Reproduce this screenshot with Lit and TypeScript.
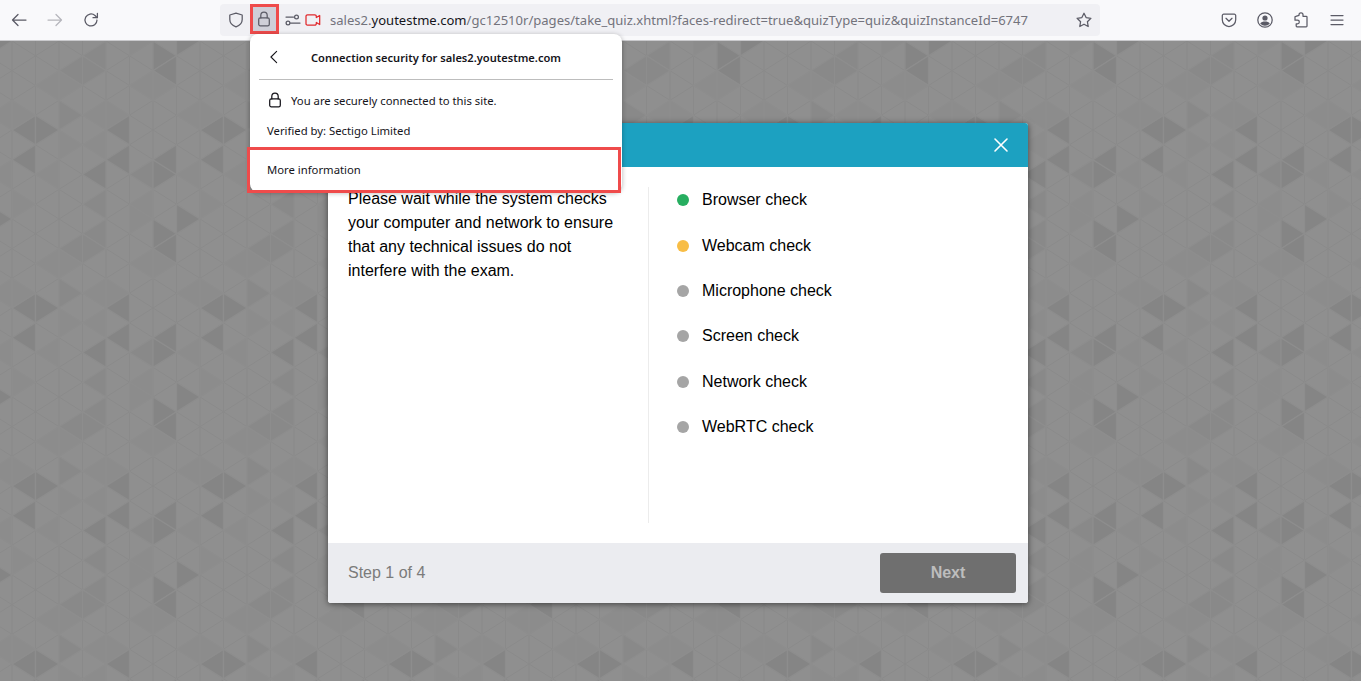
import { LitElement, html, css, svg } from "lit";
import { customElement } from "lit/decorators.js";

const W = 23.5;
const S = 29.667;
// [strip, half-row, darkness]
const TRIS: [number, number, number][] = [
  [0, 0, 3], [1, 0, 3], [0, 2, 3], [2, -1, 2], [3, -1, 1], [4, -1, 1], [4, 0, 3], [4, 2, 3],
  [3, 3, 3], [5, 3, 2], [6, 3, 3], [6, 2, 3], [3, 7, 2], [2, 8, 2], [3, 8, 2], [6, 7, 3], [6, 8, 3],
  [7, 6, 3], [3, 5, 2], [5, 5, 1], [5, 6, 1], [1, 9, 1], [2, 9, 1], [5, 9, 1], [6, 9, 1], [2, 1, 1], [0, -1, 1],
  [3, 1, 1], [7, -1, 1], [1, 3, 1], [7, 3, 1], [0, 5, 1],
];
const FILL = ["", "#8c8c8c", "#898989", "#858585"];

function triPoints(k: number, j: number, dy: number) {
  const x0 = k * W, x1 = (k + 1) * W, h = (S / 2);
  const y = (jj: number) => jj * h + dy;
  const even = ((k + j) % 2 + 2) % 2 === 0;
  return even
    ? `${x0},${y(j)} ${x1},${y(j - 1)} ${x1},${y(j + 1)}`
    : `${x1},${y(j)} ${x0},${y(j - 1)} ${x0},${y(j + 1)}`;
}

const gridLines = () => {
  const out = [];
  for (let k = 0; k <= 8; k++) {
    out.push(svg`<line x1=${k * W} y1="0" x2=${k * W} y2="178" />`);
  }
  for (let k = 0; k < 8; k++) {
    for (let n = -1; n <= 13; n++) {
      const j = n;
      if (((k + j) % 2 + 2) % 2 !== 0) continue;
      out.push(svg`<line x1=${k * W} y1=${(j * S) / 2} x2=${(k + 1) * W} y2=${((j - 1) * S) / 2} />`);
      out.push(svg`<line x1=${k * W} y1=${(j * S) / 2} x2=${(k + 1) * W} y2=${((j + 1) * S) / 2} />`);
    }
  }
  return out;
};

const checks = [
  ["Browser check", "ok"],
  ["Webcam check", "busy"],
  ["Microphone check", ""],
  ["Screen check", ""],
  ["Network check", ""],
  ["WebRTC check", ""],
];

@customElement("app-root")
export class AppRoot extends LitElement {
  static styles = css`
    :host { display: block; width: 1361px; height: 681px; overflow: hidden; position: relative; background: #8f8f8f; font-family: "Liberation Sans", Arial, sans-serif; }
    .toolbar { height: 40px; background: #f9f9fb; border-bottom: 1px solid #c9c9cc; display: flex; align-items: center; padding: 0 6px 0 1px; box-sizing: content-box; }
    .btn { width: 36px; height: 36px; display: flex; align-items: center; justify-content: center; flex: none; color: #5b5b66; }
    .btn svg, .urlbar svg { display: block; }
    .btn.off { color: #b6b6bc; }
    .urlbar { margin-left: 111px; width: 880px; height: 32px; background: #f0f0f4; border-radius: 4px; display: flex; align-items: center; flex: none; color: #5b5b66; }
    .shield { width: 30px; height: 32px; display: flex; align-items: center; justify-content: center; flex: none; padding-left: 2px; box-sizing: border-box; }
    .lock { width: 29px; height: 30px; margin-top: -2px; border: 3px solid #ef4b4b; background: #cfcfd8; box-sizing: border-box; display: flex; align-items: center; justify-content: center; flex: none; padding-right: 1px; }
    .perm { margin-left: 6px; flex: none; }
    .cam { margin-left: 4px; flex: none; color: #e0282c; }
    .url { margin-left: 9px; font: 13.05px "Noto Sans", sans-serif; color: #73737c; white-space: nowrap; flex: none; width: 746px; }
    .url b { font-weight: 400; color: #15141a; }
    .star { flex: none; }
    .right { margin-left: 111px; display: flex; flex: none; }
    .stage { height: 640px; display: grid; overflow: hidden; }
    .stage > * { grid-area: 1 / 1; }
    .bg { width: 1361px; height: 640px; display: block; }
    .center { display: flex; justify-content: center; padding: 82px 5px 0 0; z-index: 1; }
    .dialog { width: 700px; height: 480px; border-radius: 3px; overflow: hidden; background: #fff; box-shadow: 0 1px 6px rgba(0,0,0,.55); display: flex; flex-direction: column; }
    .dhead { height: 44px; background: #1ca1c1; display: flex; align-items: center; justify-content: flex-end; padding-right: 19px; flex: none; }
    .dbody { height: 376px; padding: 20px 0 20px 20px; box-sizing: border-box; display: flex; flex: none; }
    .intro { width: 301px; box-sizing: border-box; border-right: 1px solid #ececec; padding-right: 30px; margin: 0; font-size: 16px; line-height: 24px; color: #000; }
    .intro p { margin: 0; }
    .checks { margin: 0; padding: 1.3px 0 0 28px; list-style: none; display: flex; flex-direction: column; gap: 21.33px; font-size: 16px; line-height: 24px; color: #000; }
    .checks li { display: flex; align-items: center; gap: 13px; }
    .dot { width: 12px; height: 12px; border-radius: 50%; background: #a5a5a5; flex: none; }
    .dot.ok { background: #27ae60; }
    .dot.busy { background: #f8bd46; }
    .dfoot { height: 60px; background: #ebecf0; display: flex; align-items: center; justify-content: space-between; padding: 0 12px 0 20px; flex: none; }
    .step { font-size: 16px; color: #7b7b7b; }
    .next { width: 136px; height: 40px; border: 0; border-radius: 3px; background: #6f6f6f; color: #bdbdbd; font: bold 16px "Liberation Sans", Arial, sans-serif; }
    .popup { position: absolute; left: 250px; top: 34px; width: 372px; height: 158px; background: #fff; border-radius: 8px; box-shadow: 0 1px 5px rgba(0,0,0,.3); z-index: 2; font: 11.3px "Noto Sans", sans-serif; color: #15141a; display: flex; flex-direction: column; }
    .phead { height: 45px; margin: 0 9px; border-bottom: 1px solid #bdbdbd; display: flex; align-items: center; padding-left: 8px; box-sizing: content-box; flex: none; }
    .phead svg { margin-top: 1px; }
    .phead strong { font-weight: 600; font-size: 11.1px; margin: 2px 0 0 30px; white-space: nowrap; }
    .psec { display: flex; align-items: center; gap: 8px; padding: 10px 0 0 17px; height: 20px; }
    .psec svg { width: 16px; height: 16px; }
    .verified { padding: 10px 0 0 17px; height: 20px; display: flex; align-items: center; }
    .more { margin: auto 0 -1px -3px; width: 374px; height: 46px; border: 3px solid #ef4b4b; box-sizing: border-box; display: flex; align-items: center; padding: 0 0 2px 17px; flex: none; }
  `;

  private icon(paths: unknown, size = 16) {
    return html`<svg width=${size} height=${size} viewBox="0 0 16 16" fill="none" stroke="currentColor" stroke-width="1.25" stroke-linecap="round" stroke-linejoin="round">${paths}</svg>`;
  }

  render() {
    const lock = svg`<rect x="2.7" y="6.9" width="10.6" height="8" rx="1.6"/><path d="M4.8 6.9V4.4a3.2 3.2 0 0 1 6.4 0v2.5"/>`;
    return html`
      <div class="toolbar">
        <div class="btn">${this.icon(svg`<path d="M1.5 8h13.5M7 2.5 1.5 8 7 13.5"/>`)}</div>
        <div class="btn off">${this.icon(svg`<path d="M14.5 8H1M9 2.5 14.5 8 9 13.5"/>`)}</div>
        <div class="btn">${this.icon(svg`<path d="M14 8a6 6 0 1 1-2-4.500L14 5.500"/><path d="M14.400 1.300v4.400H10" />`)}</div>
        <div class="urlbar">
          <div class="shield">${this.icon(svg`<path d="M8 1.200 1.800 3v4.600c0 3.600 2.600 6 6.200 7.200 3.600-1.200 6.200-3.600 6.200-7.200V3z"/>`)}</div>
          <div class="lock">${this.icon(lock)}</div>
          <span class="perm">${this.icon(svg`<path d="M1 5h7.500M5.500 11H15"/><circle cx="11.500" cy="5" r="1.900"/><circle cx="3" cy="11" r="1.900"/>`)}</span>
          <span class="cam">${this.icon(svg`<path d="M2.500 2.800h7.300a1.500 1.500 0 0 1 1.500 1.500v1.200l3.400-2v9l-3.400-2v1.200a1.500 1.500 0 0 1-1.500 1.500H2.500A1.500 1.500 0 0 1 1 11.500V4.300a1.500 1.500 0 0 1 1.500-1.500z"/>`)}</span>
          <span class="url">sales2.<b>youtestme.com</b>/gc12510r/pages/take_quiz.xhtml?faces-redirect=true&quizType=quiz&quizInstanceId=6747</span>
          <span class="star">${this.icon(svg`<path d="m8 1.200 2.100 4.400 4.800.7-3.500 3.400.8 4.800L8 12.200l-4.200 2.300.8-4.800L1.100 6.300l4.800-.7z"/>`)}</span>
        </div>
        <div class="right">
          <div class="btn">${this.icon(svg`<path d="M2.700 2.200h10.600A1.400 1.400 0 0 1 14.700 3.600v4.200a6.700 6.700 0 0 1-13.400 0V3.600a1.400 1.400 0 0 1 1.400-1.400z"/><path d="m5 6.300 3 3 3-3"/>`)}</div>
          <div class="btn">
            <svg width="16" height="16" viewBox="0 0 16 16" fill="none" stroke="currentColor" stroke-width="1.25"><circle cx="8" cy="8" r="7.200"/><circle cx="8" cy="6" r="2.600" fill="currentColor" stroke="none"/><path d="M3.200 11.400c1-1.300 2.800-1.900 4.800-1.900s3.800.6 4.800 1.900a6.200 6.200 0 0 1-9.600 0z" fill="currentColor" stroke="none"/></svg>
          </div>
          <div class="btn">${this.icon(svg`<path d="M6 3.500V3a2 2 0 0 1 4 0v1.500h3.200a.8.800 0 0 1 .8.800v9a.8.800 0 0 1-.8.800H4a.8.800 0 0 1-.8-.8v-2.300h1.300a1.800 1.800 0 0 0 0-3.600H2V5.300a.8.800 0 0 1 .8-.8z" transform="translate(0 -.2)"/>`)}</div>
          <div class="btn">${this.icon(svg`<path d="M2 3.500h12M2 8h12M2 12.500h12"/>`)}</div>
        </div>
      </div>
      <div class="stage">
        <svg class="bg" viewBox="0 0 1361 640" aria-hidden="true">
          <defs>
            <pattern id="tri" width="188" height="178" patternUnits="userSpaceOnUse" patternTransform="translate(12 89)">
              <rect width="188" height="178" fill="#8f8f8f"/>
              <g stroke="#8a8a8a" stroke-width="1">${gridLines()}</g>
              <g stroke="#8d8d8d" stroke-width="1.2">
                ${TRIS.flatMap(([k, j, d]) => [0, 178, -178].map((dy) => svg`<polygon points=${triPoints(k, j, dy)} fill=${FILL[d]} />`))}
              </g>
            </pattern>
          </defs>
          <rect width="1361" height="640" fill="url(#tri)"/>
        </svg>
        <div class="center">
          <section class="dialog">
            <header class="dhead">
              <svg width="16" height="16" viewBox="0 0 16 16" fill="none" stroke="#fff" stroke-width="1.600" stroke-linecap="round"><path d="m2 2 12 12M14 2 2 14"/></svg>
            </header>
            <div class="dbody">
              <div class="intro"><p>Please wait while the system checks your computer and network to ensure that any technical issues do not interfere with the exam.</p></div>
              <ul class="checks">
                ${checks.map(([label, st]) => html`<li><span class="dot ${st}"></span>${label}</li>`)}
              </ul>
            </div>
            <footer class="dfoot">
              <span class="step">Step 1 of 4</span>
              <button class="next">Next</button>
            </footer>
          </section>
        </div>
      </div>
      <div class="popup">
        <div class="phead">
          ${this.icon(svg`<path d="M11 1.500 4.500 8 11 14.500"/>`, 14)}
          <strong>Connection security for sales2.youtestme.com</strong>
        </div>
        <div class="psec">${this.icon(lock, 16)}<span>You are securely connected to this site.</span></div>
        <div class="verified">Verified by: Sectigo Limited</div>
        <div class="more">More information</div>
      </div>
    `;
  }
}
